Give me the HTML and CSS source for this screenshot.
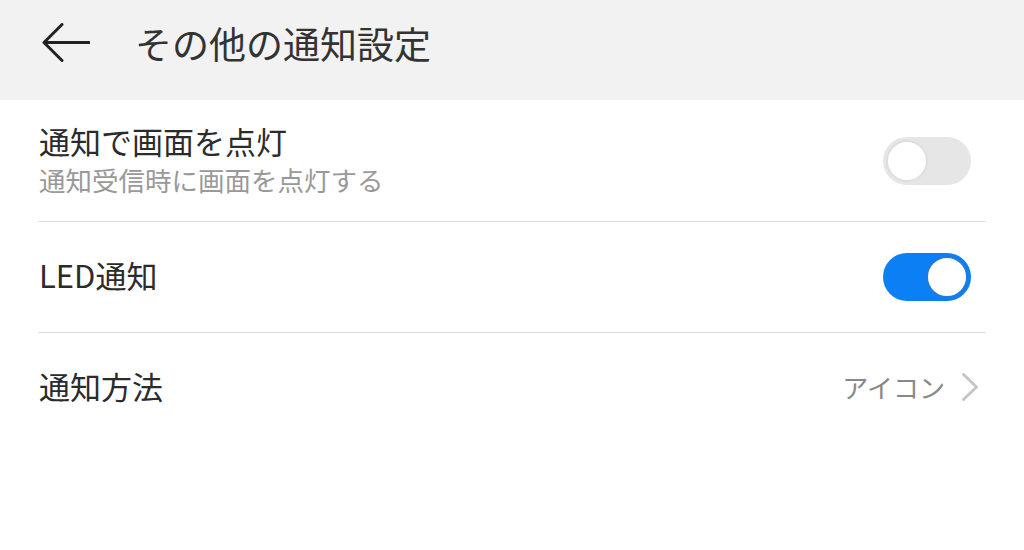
FILE: index.html
```html
<!DOCTYPE html>
<html lang="ja">
<head>
  <meta charset="UTF-8" />
  <meta name="viewport" content="width=device-width, initial-scale=1.0"/>
  <title>その他の通知設定</title>
  <link rel="stylesheet" href="styles.css">
</head>
<body>
  <header class="topbar">
    <button class="back" aria-label="戻る">
      <svg width="48" height="40" viewBox="0 0 48 40">
        <path d="M2 19.5 H47 M20 1.5 L2 19.5 L20 37.5" fill="none" stroke="#222" stroke-width="3" stroke-linecap="round" stroke-linejoin="round"/>
      </svg>
    </button>
    <h1>その他の通知設定</h1>
  </header>

  <ul class="settings">
    <li class="row row-tall">
      <div class="text">
        <div class="label">通知で画面を点灯</div>
        <div class="sub">通知受信時に画面を点灯する</div>
      </div>
      <span class="switch"></span>
    </li>
    <li class="row">
      <div class="text">
        <div class="label">LED通知</div>
      </div>
      <span class="switch on"></span>
    </li>
    <li class="row">
      <div class="text">
        <div class="label">通知方法</div>
      </div>
      <div class="value">
        アイコン
        <svg width="18" height="28" viewBox="0 0 18 28">
          <path d="M2.5 1.5 L15.5 14 L2.5 26.5" fill="none" stroke="#c6c6c6" stroke-width="3" stroke-linecap="round" stroke-linejoin="round"/>
        </svg>
      </div>
    </li>
  </ul>
</body>
</html>
```

FILE: styles.css
```css
body {
  margin: 0;
  font-family: "Noto Sans CJK JP", "Noto Sans", sans-serif;
  background: #fff;
  color: #333;
}

.topbar {
  height: 100px;
  background: #f2f2f2;
  display: flex;
  align-items: center;
  padding-left: 42px;
  padding-bottom: 14px;
  box-sizing: border-box;
}

.back {
  border: none;
  background: none;
  padding: 0;
  margin-right: 45px;
  display: flex;
}

.topbar h1 {
  margin: 0;
  font-size: 37px;
  font-weight: normal;
  line-height: 1;
  color: #333;
}

.settings {
  list-style: none;
  margin: 0;
  padding: 0 38px;
}

.row {
  height: 110px;
  display: flex;
  align-items: center;
  justify-content: space-between;
  border-bottom: 1px solid #dcdcdc;
}

.row-tall {
  height: 121px;
}

.row:last-child {
  border-bottom: none;
}

.text {
  padding-bottom: 5px;
}

.row-tall .text {
  padding-bottom: 2px;
}

.label {
  font-size: 31px;
  line-height: 38px;
  color: #2b2b2b;
  padding-left: 1px;
}

.sub {
  font-size: 26.5px;
  line-height: 34px;
  color: #999;
  margin-top: 3px;
  padding-left: 1px;
}

.switch {
  width: 88px;
  height: 48px;
  border-radius: 24px;
  background: #e6e6e6;
  position: relative;
  margin-right: 15px;
  flex-shrink: 0;
}

.switch::after {
  content: "";
  position: absolute;
  top: 3px;
  left: 3px;
  width: 38px;
  height: 38px;
  border-radius: 50%;
  background: #fff;
  border: 2px solid #dedede;
}

.switch.on {
  background: #0b7ff4;
}

.switch.on::after {
  left: auto;
  right: 3px;
  border-color: #2479d9;
}

.value {
  display: flex;
  align-items: center;
  gap: 16px;
  font-size: 26px;
  color: #888;
  margin-right: 7px;
  padding-bottom: 3px;
}
```
